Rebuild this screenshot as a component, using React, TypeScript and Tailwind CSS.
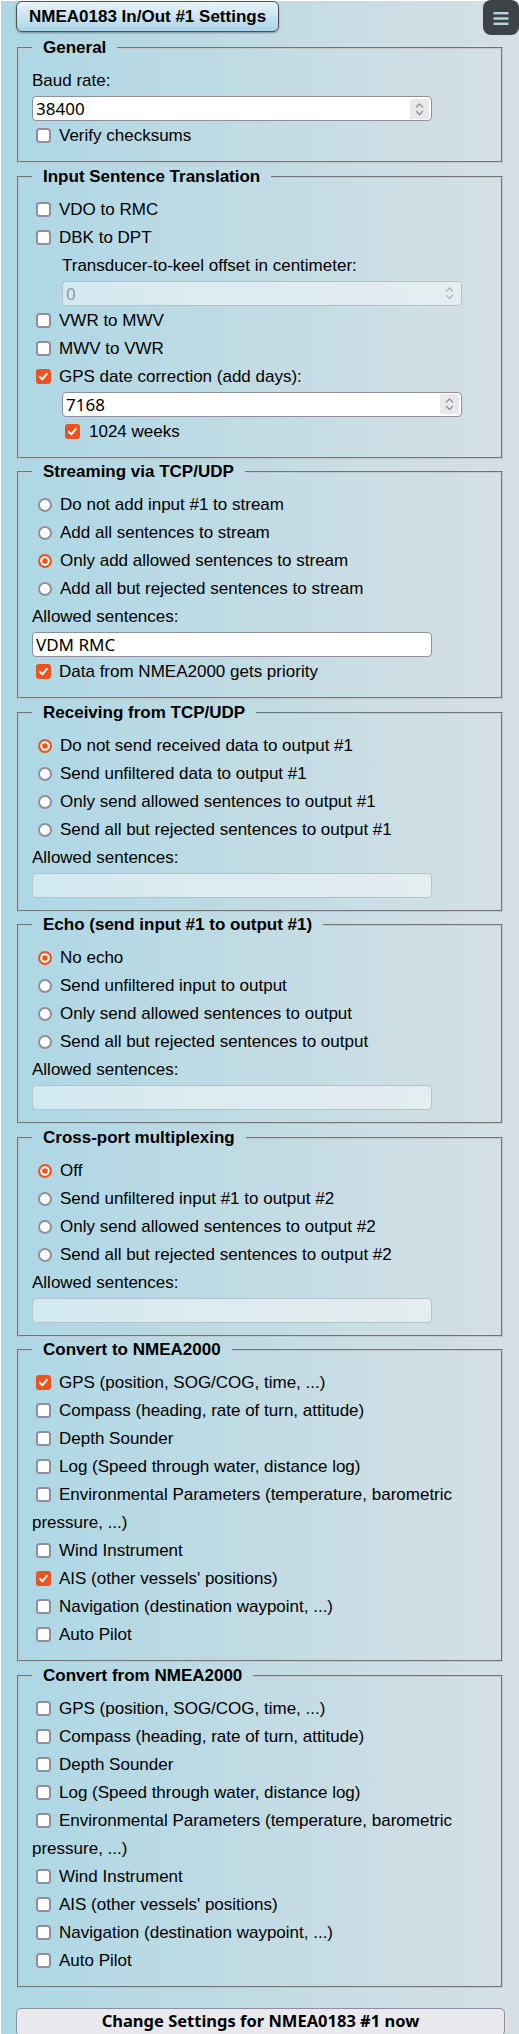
import React from "react";

// settings page for one NMEA0183 port

const Box = ({ checked }: { checked?: boolean }) =>
  checked ? (
    <svg width="15" height="15" viewBox="0 0 15 15" className="inline-block align-[-2px]">
      <rect x="0" y="0" width="15" height="15" rx="3" fill="#e95420" />
      <path d="M3.8 7.8 L6.4 10.3 L11 4.7" fill="none" stroke="#fff" strokeWidth="1.9" strokeLinecap="round" strokeLinejoin="round" />
    </svg>
  ) : (
    <svg width="15" height="15" viewBox="0 0 15 15" className="inline-block align-[-2px]">
      <rect x="1" y="1" width="13" height="13" rx="2.5" fill="#fff" stroke="#8f8f9d" strokeWidth="2" />
    </svg>
  );

const Dot = ({ checked }: { checked?: boolean }) =>
  checked ? (
    <svg width="14" height="14" viewBox="0 0 14 14" className="inline-block align-[-2px]">
      <circle cx="7" cy="7" r="7" fill="#e95420" />
      <circle cx="7" cy="7" r="4.8" fill="#fff" />
      <circle cx="7" cy="7" r="2.8" fill="#e95420" />
    </svg>
  ) : (
    <svg width="14" height="14" viewBox="0 0 14 14" className="inline-block align-[-2px]">
      <circle cx="7" cy="7" r="6" fill="#fff" stroke="#8f8f9d" strokeWidth="2" />
    </svg>
  );

const Check = ({ label, checked, inner }: { label: string; checked?: boolean; inner?: boolean }) => (
  <label className={`block leading-[28px] ${inner ? "pl-[30px]" : ""}`}>
    <span className={inner ? "ml-[3px] mr-[9px]" : "ml-[4px] mr-[8px]"}>
      <Box checked={checked} />
    </span>
    {label}
  </label>
);

const Radio = ({ label, checked }: { label: string; checked?: boolean }) => (
  <label className="block leading-[28px]">
    <span className="ml-[6px] mr-[8px]">
      <Dot checked={checked} />
    </span>
    {label}
  </label>
);

const Spin = ({ disabled }: { disabled?: boolean }) => (
  <span className={`w-[19px] h-[20px] mr-[2px] flex items-center justify-center ${disabled ? "" : "bg-[#e9e9ed]"}`}>
    <svg width="19" height="20" viewBox="0 0 19 20">
      <path d="M6 8.5 L9.5 5 L13 8.5 M6 12 L9.5 15.5 L13 12" fill="none" stroke={disabled ? "#a9b8be" : "#8f8f9d"} strokeWidth="1.3" />
    </svg>
  </span>
);

const Field = ({ value, number, disabled, inner }: { value?: string; number?: boolean; disabled?: boolean; inner?: boolean }) => (
  <div
    className={`flex items-center w-[400px] h-[25px] my-px rounded-[4px] border font-['Noto_Sans',sans-serif] text-[17px] ${
      disabled ? "border-[#b3c3ca] bg-white/45 text-[#8c9ca3]" : "border-[#8f8f9d] bg-white text-black"
    } ${inner ? "ml-[30px]" : ""}`}
  >
    <span className="flex-1 pl-[3px] leading-none">{value}</span>
    {number && <Spin disabled={disabled} />}
  </div>
);

const Group = ({ title, children, first }: { title: string; children: React.ReactNode; first?: boolean }) => (
  <fieldset
    className={`border-2 [border-style:groove]! border-[#c4c8ca] px-[13px] pt-[9px] pb-[11px] ${first ? "mt-[6px]" : "mt-[3.5px]"}`}
  >
    <legend className="px-[11px] font-bold leading-[20px] text-black">{title}</legend>
    {children}
  </fieldset>
);

const Label = ({ children, inner }: { children: React.ReactNode; inner?: boolean }) => (
  <div className={`leading-[28px] ${inner ? "pl-[30px]" : ""}`}>{children}</div>
);

const nmeaItems = [
  "GPS (position, SOG/COG, time, ...)",
  "Compass (heading, rate of turn, attitude)",
  "Depth Sounder",
  "Log (Speed through water, distance log)",
  "Environmental Parameters (temperature, barometric pressure, ...)",
  "Wind Instrument",
  "AIS (other vessels' positions)",
  "Navigation (destination waypoint, ...)",
  "Auto Pilot",
];

const App = () => {
  const toChecked = [0, 6];
  return (
    <div className="relative min-h-screen bg-white pt-[12px] pl-px font-['Liberation_Sans',Arial,sans-serif] text-[17px] text-black">
      <div className="bg-linear-to-r from-[#acd7e5] to-[#d6e0e4] px-[16px]">
        <div className="-mt-[11px] -ml-px w-fit h-[31px] flex items-center px-[12px] rounded-[6px] border border-[#505050] bg-linear-to-b from-[#eaf4f9] to-[#a9d4e7] shadow-[0_1px_2px_rgba(0,0,0,0.35)] font-bold text-black">
          NMEA0183 In/Out #1 Settings
        </div>

        <Group title="General" first>
          <Label>Baud rate:</Label>
          <Field value="38400" number />
          <Check label="Verify checksums" />
        </Group>

        <Group title="Input Sentence Translation">
          <Check label="VDO to RMC" />
          <Check label="DBK to DPT" />
          <Label inner>Transducer-to-keel offset in centimeter:</Label>
          <Field value="0" number disabled inner />
          <Check label="VWR to MWV" />
          <Check label="MWV to VWR" />
          <Check label="GPS date correction (add days):" checked />
          <Field value="7168" number inner />
          <Check label="1024 weeks" checked inner />
        </Group>

        <Group title="Streaming via TCP/UDP">
          <Radio label="Do not add input #1 to stream" />
          <Radio label="Add all sentences to stream" />
          <Radio label="Only add allowed sentences to stream" checked />
          <Radio label="Add all but rejected sentences to stream" />
          <Label>Allowed sentences:</Label>
          <Field value="VDM RMC" />
          <Check label="Data from NMEA2000 gets priority" checked />
        </Group>

        <Group title="Receiving from TCP/UDP">
          <Radio label="Do not send received data to output #1" checked />
          <Radio label="Send unfiltered data to output #1" />
          <Radio label="Only send allowed sentences to output #1" />
          <Radio label="Send all but rejected sentences to output #1" />
          <Label>Allowed sentences:</Label>
          <Field disabled />
        </Group>

        <Group title="Echo (send input #1 to output #1)">
          <Radio label="No echo" checked />
          <Radio label="Send unfiltered input to output" />
          <Radio label="Only send allowed sentences to output" />
          <Radio label="Send all but rejected sentences to output" />
          <Label>Allowed sentences:</Label>
          <Field disabled />
        </Group>

        <Group title="Cross-port multiplexing">
          <Radio label="Off" checked />
          <Radio label="Send unfiltered input #1 to output #2" />
          <Radio label="Only send allowed sentences to output #2" />
          <Radio label="Send all but rejected sentences to output #2" />
          <Label>Allowed sentences:</Label>
          <Field disabled />
        </Group>

        <Group title="Convert to NMEA2000">
          {nmeaItems.map((t, i) => (
            <Check key={t} label={t} checked={toChecked.includes(i)} />
          ))}
        </Group>

        <Group title="Convert from NMEA2000">
          {nmeaItems.map((t) => (
            <Check key={t} label={t} />
          ))}
        </Group>

        <button className="mt-[20px] -ml-px w-[489px] h-[28px] rounded-[5px] border border-[#8f8f9d] bg-[#e9e9ed] font-['Noto_Sans',sans-serif] font-bold text-[16.5px] text-black leading-none">
          Change Settings for NMEA0183 #1 now
        </button>
      </div>

      <div className="absolute top-0 right-0 w-[36px] h-[35px] rounded-[8px] bg-[#3c4246] flex items-center justify-center">
        <svg width="16" height="14" viewBox="0 0 16 14">
          <rect x="0.5" y="1" width="15" height="2.4" fill="#b3d6e4" />
          <rect x="0.5" y="6.3" width="15" height="2.4" fill="#b3d6e4" />
          <rect x="0.5" y="11.6" width="15" height="2.4" fill="#b3d6e4" />
        </svg>
      </div>
    </div>
  );
};

export default App;
